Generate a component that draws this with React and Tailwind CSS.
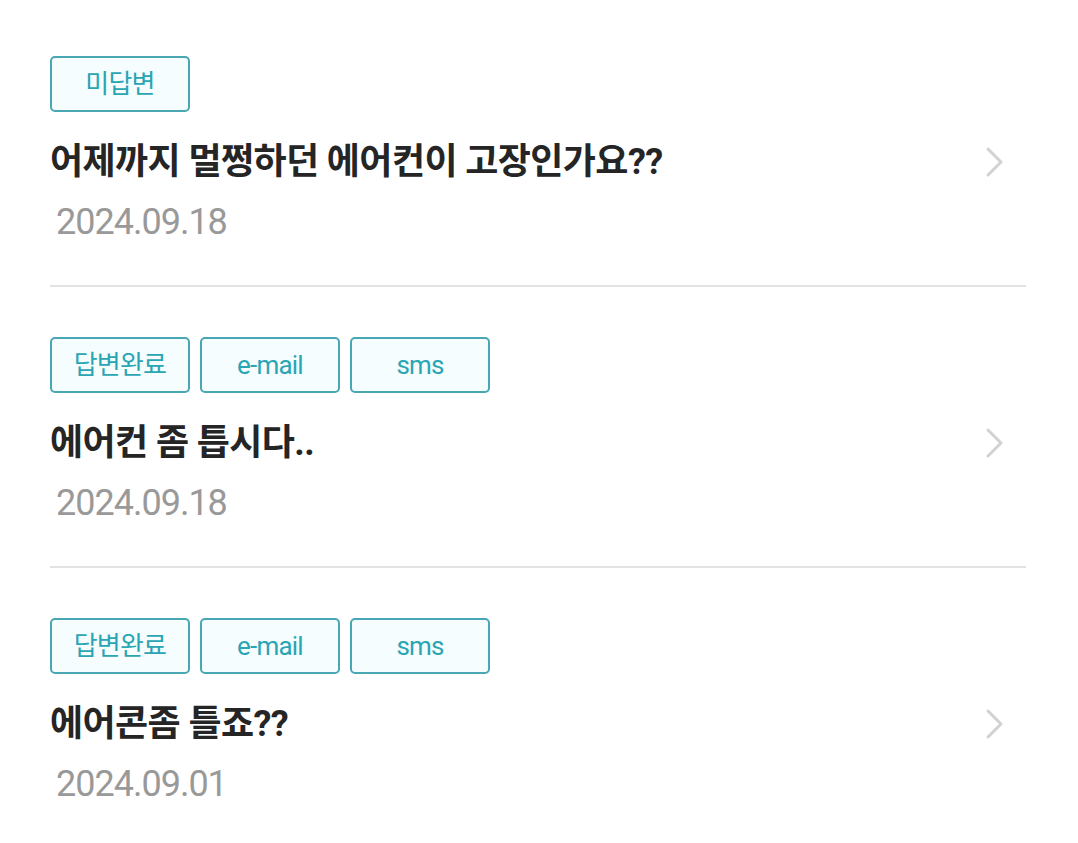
import React from "react";

const items = [
  { tags: ["미답변"], title: "어제까지 멀쩡하던 에어컨이 고장인가요??", date: "2024.09.18" },
  { tags: ["답변완료", "e-mail", "sms"], title: "에어컨 좀 틉시다..", date: "2024.09.18" },
  { tags: ["답변완료", "e-mail", "sms"], title: "에어콘좀 틀죠??", date: "2024.09.01" },
];

function Chevron() {
  return (
    <svg width="20" height="32" viewBox="0 0 20 32" fill="none">
      <path d="M3 3 L16 16 L3 29" stroke="#d2d2d2" strokeWidth="3" strokeLinecap="round" strokeLinejoin="round" />
    </svg>
  );
}

function Item({ item, first, last }) {
  return (
    <div className={`${first ? "pt-[56px]" : "pt-[50px]"} pb-[43px] ${last ? "" : "border-b-2 border-[#e2e2e2]"}`}>
      <div className="flex gap-[10px]">
        {item.tags.map((t) => (
          <span
            key={t}
            className="w-[140px] h-[56px] flex items-center justify-center rounded-[5px] border-2 border-[#49a7b4] bg-[#f5fdfe] text-[26px] text-[#2aa5b4] tracking-[-0.8px]"
          >
            {t}
          </span>
        ))}
      </div>
      <div className="flex items-center justify-between mt-[25px]">
        <h2 className="text-[36px] font-bold text-[#252525] tracking-[-0.6px] leading-[50px]">{item.title}</h2>
        <div className="mr-[21px]">
          <Chevron />
        </div>
      </div>
      <p className="mt-[15px] pl-[6px] text-[36px] text-[#999999] tracking-[-1px] leading-[40px]">{item.date}</p>
    </div>
  );
}

export default function App() {
  return (
    <div
      className="min-h-screen bg-white px-[50px] pr-[52px]"
      style={{ fontFamily: 'Roboto, "Noto Sans CJK KR", sans-serif' }}
    >
      {items.map((item, i) => (
        <Item key={i} item={item} first={i === 0} last={i === items.length - 1} />
      ))}
    </div>
  );
}
